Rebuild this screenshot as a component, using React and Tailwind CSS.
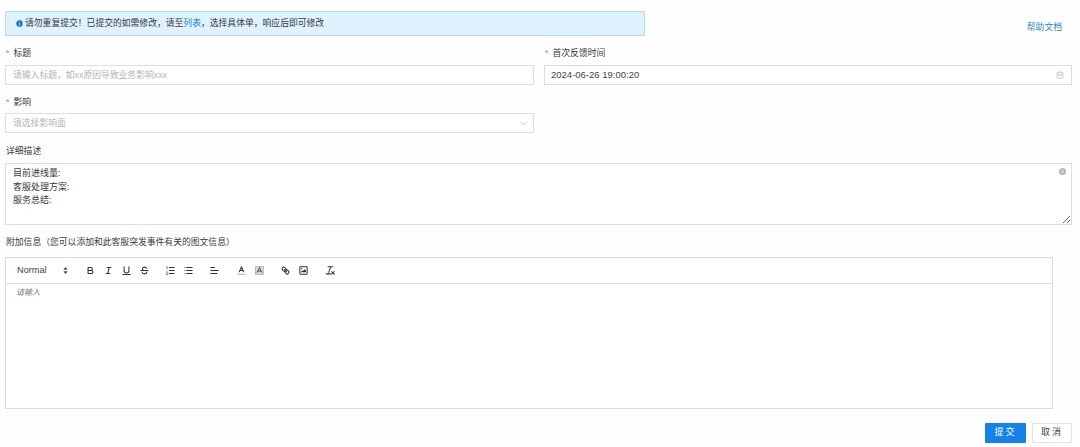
import { CalendarDays, ChevronDown, Info, X } from "lucide-react"

const FONT = "font-['Liberation_Sans','Noto_Sans_CJK_SC',sans-serif]"

function Label({ required, children }) {
  return (
    <div className="flex h-[12px] items-center pl-[1px] text-[8.8px] leading-[12px] text-[#3a3a3a]">
      {required ? <span className="mr-[4px] text-[9px] text-[#e5737a]">*</span> : null}
      {children}
    </div>
  )
}

function Svg({ children }) {
  return (
    <svg
      viewBox="0 0 18 18"
      className="h-[11px] w-[11px]"
      fill="none"
      stroke="#333"
      strokeWidth="1.7"
      strokeLinecap="round"
      strokeLinejoin="round"
    >
      {children}
    </svg>
  )
}

function ToolButton({ children }) {
  return <span className="flex h-[18px] w-[18px] items-center justify-center">{children}</span>
}

function Group({ className = "", children }) {
  return <div className={`flex ${className}`}>{children}</div>
}

function Toolbar() {
  return (
    <div className="flex h-[26px] items-center border-b border-[#dcdcdc] pl-[5px]">
      <div className="flex w-[70px] items-center pl-[6px] text-[9.2px] text-[#444]">
        <span className="w-[46px]">Normal</span>
        <svg viewBox="0 0 6 10" className="h-[7px] w-[5px]" fill="#444">
          <path d="M3 0 6 4H0Z" />
          <path d="M3 10 0 6H6Z" />
        </svg>
      </div>
      <Group>
        <ToolButton>
          <Svg>
            <path d="M5,4H9.5A2.5,2.5,0,0,1,12,6.5v0A2.5,2.5,0,0,1,9.5,9H5V4Z" />
            <path d="M5,9h5.5A2.5,2.5,0,0,1,13,11.5v0A2.5,2.5,0,0,1,10.5,14H5V9Z" />
          </Svg>
        </ToolButton>
        <ToolButton>
          <Svg>
            <path d="M7 4H13M5 14H11M8 14 10 4" />
          </Svg>
        </ToolButton>
        <ToolButton>
          <Svg>
            <path d="M5,3V9a4,4,0,0,0,8,0V3" />
            <path d="M3 15.5H15" />
          </Svg>
        </ToolButton>
        <ToolButton>
          <Svg>
            <path d="M3 9H15" />
            <path d="M12.5 5.5C12 4.3 10.7 3.5 9 3.5 7 3.5 5.6 4.6 5.6 6.2 5.6 7.6 6.5 8.4 8 9" />
            <path d="M12.7 11.5C12.7 13.4 11.2 14.5 9 14.5 7.2 14.5 5.8 13.7 5.3 12.4" />
          </Svg>
        </ToolButton>
      </Group>
      <Group className="ml-[8px]">
        <ToolButton>
          <Svg>
            <path d="M7 4H15M7 9H15M7 14H15" />
            <path d="M2.5 3 3.5 2.5V6.5M2 11.5C2.5 10.5 4.5 10.7 4.5 12 4.5 13 2.5 14 2 15.5H4.5" strokeWidth="1" />
          </Svg>
        </ToolButton>
        <ToolButton>
          <Svg>
            <path d="M6 4H15M6 9H15M6 14H15M3 4H3M3 9H3M3 14H3" />
          </Svg>
        </ToolButton>
      </Group>
      <Group className="ml-[8px]">
        <ToolButton>
          <Svg>
            <path d="M3 4H9M3 9H15M3 14H13" />
          </Svg>
        </ToolButton>
      </Group>
      <Group className="ml-[9px]">
        <ToolButton>
          <Svg>
            <path d="M5.5 11 9 3 12.5 11M11.63 9H6.37" />
            <path d="M3 15H15" stroke="#aaa" />
          </Svg>
        </ToolButton>
        <ToolButton>
          <Svg>
            <rect x="2.5" y="2.5" width="13" height="13" fill="#ddd" stroke="#999" strokeWidth="1" strokeDasharray="1 1" />
            <path d="M5.5 12 9 4 12.5 12M11.63 10H6.37" strokeWidth="1.3" />
          </Svg>
        </ToolButton>
      </Group>
      <Group className="ml-[8px]">
        <ToolButton>
          <Svg>
            <path d="M7 7 11 11" />
            <path d="M8.9,4.577a3.476,3.476,0,0,1,.36,4.679A3.476,3.476,0,0,1,4.577,8.9C3.185,7.5,2.035,6.4,4.217,4.217S7.5,3.185,8.9,4.577Z" />
            <path d="M13.423,9.1a3.476,3.476,0,0,0-4.679-.36,3.476,3.476,0,0,0,.36,4.679c1.392,1.392,2.5,2.542,4.679.36S14.815,10.5,13.423,9.1Z" />
          </Svg>
        </ToolButton>
        <ToolButton>
          <Svg>
            <rect x="3" y="3" width="12" height="12" rx="1" />
            <circle cx="6" cy="6" r="1" fill="#333" stroke="none" />
            <path d="M5 12V11L7 9 8 10 11 7 13 9V12Z" fill="#333" stroke="none" />
          </Svg>
        </ToolButton>
      </Group>
      <Group className="ml-[9px]">
        <ToolButton>
          <Svg>
            <path d="M5 3H13M6 12 9.35 3M11 11 15 15M15 11 11 15M2 14.5H9" />
          </Svg>
        </ToolButton>
      </Group>
    </div>
  )
}

export default function App() {
  return (
    <div className={`flex h-[447px] w-[1080px] flex-col overflow-hidden bg-[#fefefe] pl-[5px] pr-[8px] pt-[11px] ${FONT}`}>
      <div className="flex h-[25px] items-start justify-between">
        <div className="flex h-[25px] w-[640px] items-center border border-[#b9dcec] bg-[#def3fd] pl-[9px] text-[8.8px] text-[#3a3a3a]">
          <Info size={9} fill="#1677c9" stroke="#fff" className="mr-[1px]" />
          <span>
            请勿重复提交！已提交的如需修改，请至<span className="text-[#1a7fd0]">列表</span>，选择具体单，响应后即可修改
          </span>
        </div>
        <span className="mr-[10px] mt-[10px] text-[8.8px] leading-[12px] text-[#2f86c8]">帮助文档</span>
      </div>

      <div className="mt-[11px] grid grid-cols-[529px_528px] gap-x-[10px]">
        <div>
          <Label required>标题</Label>
          <input
            className="mt-[6px] block h-[20px] w-full border border-[#dedede] bg-white px-[7px] text-[8.8px] outline-none placeholder:text-[#b4b4b4]"
            placeholder="请输入标题，如xx原因导致业务影响xxx"
          />
        </div>
        <div>
          <Label required>首次反馈时间</Label>
          <div className="mt-[6px] flex h-[20px] items-center justify-between border border-[#dedede] bg-white pl-[6px] pr-[7px] text-[9.5px] text-[#444]">
            <span>2024-06-26 19:00:20</span>
            <CalendarDays size={8} stroke="#bbb" />
          </div>
        </div>
        <div className="mt-[11px]">
          <Label required>影响</Label>
          <div className="mt-[5px] flex h-[20px] items-center justify-between border border-[#dedede] bg-white pl-[7px] pr-[4px] pt-[1px] text-[8.8px] text-[#b4b4b4]">
            <span>请选择影响面</span>
            <ChevronDown size={11} stroke="#bbb" />
          </div>
        </div>
      </div>

      <div className="mt-[12px]">
        <Label>详细描述</Label>
        <div className="relative mt-[6px]">
          <textarea
            className="block h-[62px] w-full resize-y border border-[#dedede] bg-white px-[7px] py-[3px] text-[9px] leading-[13.5px] text-[#3a3a3a] outline-none"
            defaultValue={"目前进线量:\n客服处理方案:\n服务总结:"}
          />
          <span className="absolute right-[6px] top-[5px] flex h-[7px] w-[7px] items-center justify-center rounded-full bg-[#b5b5b5]">
            <X size={5} stroke="#fff" strokeWidth={3} />
          </span>
        </div>
      </div>

      <div className="mt-[11px]">
        <Label>附加信息（您可以添加和此客服突发事件有关的图文信息）</Label>
        <div className="mt-[9px] h-[152px] w-[1048px] border border-[#dcdcdc] bg-white">
          <Toolbar />
          <div className="pl-[10px] pt-[3px] text-[8px] italic leading-[12px] text-[#777]">请输入</div>
        </div>
      </div>

      <div className="mt-[14px] flex justify-end gap-[6px]">
        <button className="h-[20px] w-[41px] rounded-[1px] bg-[#1482e6] text-[9px] tracking-[2px] text-white">提交</button>
        <button className="h-[20px] w-[40px] rounded-[1px] border border-[#e2e2e2] bg-white text-[9px] tracking-[2px] text-[#444]">取消</button>
      </div>
    </div>
  )
}
